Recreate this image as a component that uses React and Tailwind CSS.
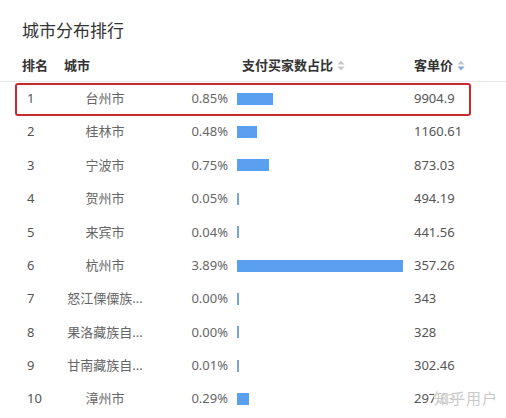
import React from 'react';

const rows = [
  { rank: 1, city: "台州市", pct: 0.85, price: "9904.9" },
  { rank: 2, city: "桂林市", pct: 0.48, price: "1160.61" },
  { rank: 3, city: "宁波市", pct: 0.75, price: "873.03" },
  { rank: 4, city: "贺州市", pct: 0.05, price: "494.19" },
  { rank: 5, city: "来宾市", pct: 0.04, price: "441.56" },
  { rank: 6, city: "杭州市", pct: 3.89, price: "357.26" },
  { rank: 7, city: "怒江傈僳族自治州", pct: 0.0, price: "343" },
  { rank: 8, city: "果洛藏族自治州", pct: 0.0, price: "328" },
  { rank: 9, city: "甘南藏族自治州", pct: 0.01, price: "302.46" },
  { rank: 10, city: "漳州市", pct: 0.29, price: "297.83" },
];

const maxPct = 3.89;
const maxBar = 166;

const shorten = (name) => (name.length > 5 ? name.slice(0, 5) + "..." : name);

const SortIcon = ({ active }) => (
  <svg width="8" height="11" viewBox="0 0 8 11" className="ml-[4px]">
    <path d="M4 0.5 L7.5 4.5 L0.5 4.5 Z" fill="#c4c8cf" />
    <path d="M4 10.5 L7.5 6.5 L0.5 6.5 Z" fill={active ? "#7ea6dc" : "#c4c8cf"} />
  </svg>
);

const App = () => {
  return (
    <div className="w-[506px] h-[418px] bg-white overflow-hidden relative font-['Noto_Sans','Noto_Sans_CJK_SC',sans-serif]">
      {/* 标题 */}
      <div className="h-[50px] pt-[19px] pl-[22px] text-[17px] leading-[24px] text-[#333]">
        城市分布排行
      </div>

      {/* 表头 */}
      <div className="flex items-center h-[32px] border-b border-[#e9e9e9] text-[13px] font-bold text-[#333]">
        <div className="w-[64px] pl-[22px]">排名</div>
        <div className="w-[82px]">城市</div>
        <div className="w-[96px]"></div>
        <div className="w-[172px] flex items-center">
          支付买家数占比
          <SortIcon />
        </div>
        <div className="flex items-center">
          客单价
          <SortIcon active />
        </div>
      </div>

      {/* 数据行 */}
      {rows.map((row) => {
        const w = Math.max(2, (row.pct / maxPct) * maxBar);
        const thin = w < 4;
        return (
          <div key={row.rank} className="relative flex items-center h-[33.4px] text-[13px] text-[#555]">
            <div className="w-[64px] pl-[27px]">{row.rank}</div>
            <div className="w-[82px] text-center text-[#666] whitespace-nowrap">{shorten(row.city)}</div>
            <div className="w-[82px] text-right text-[#666]">{row.pct.toFixed(2)}%</div>
            <div className="w-[9px]"></div>
            <div className="w-[177px] flex items-center">
              <div
                className={thin ? "h-[12px] bg-[#7aa3d6]" : "h-[12px] bg-[#5b9ff0]"}
                style={{ width: `${w}px` }}
              ></div>
            </div>
            <div className="relative">
              {row.price}
              {row.rank === 10 && (
                <span className="absolute left-[20px] top-[-2px] text-[15px] text-[#c9c9c9] bg-white/70 whitespace-nowrap tracking-[1px]">
                  知乎用户
                </span>
              )}
            </div>
            {row.rank === 1 && (
              <div className="absolute left-[15px] w-[456px] top-[1px] bottom-[-1px] border-2 border-[#c62a2f] rounded-[3px]"></div>
            )}
          </div>
        );
      })}
    </div>
  );
};

export default App;
